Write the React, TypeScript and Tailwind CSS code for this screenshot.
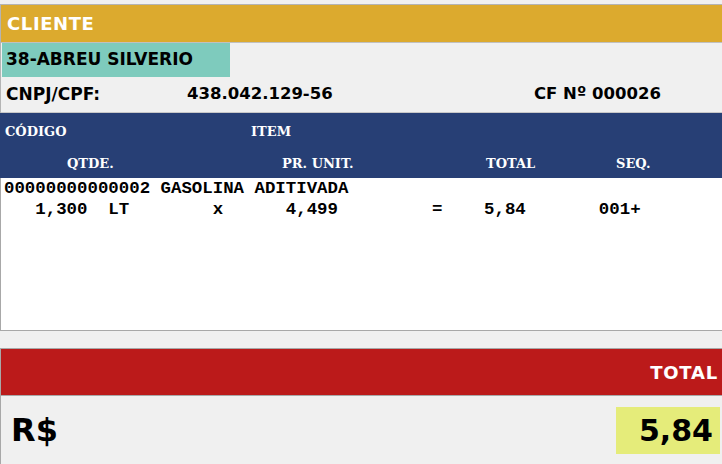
import React from 'react';

const sans = "font-['DejaVu_Sans',sans-serif] font-bold";
const head = "font-['DejaVu_Serif',serif] font-bold";
const mono = "font-['Liberation_Mono',monospace] font-bold";

const ITEM_LINE_1 = '00000000000002 GASOLINA ADITIVADA';
const ITEM_LINE_2 = '   1,300  LT        x      4,499         =    5,84       001+';

const App: React.FC = () => {
  return (
    <div className="w-[722px] h-[464px] bg-[#f0f0f0] flex flex-col overflow-hidden">
      {/* Cliente */}
      <div className="mt-[4px] border-t border-l border-[#b4b4b4] flex flex-col">
        <div className="h-[38px] bg-[#dcaa2e] border-b border-[#c0c0c0] flex items-center px-[6px]">
          <span className={`${sans} text-white text-[18px] tracking-[0.6px]`}>CLIENTE</span>
        </div>
        <div className="h-[34px] flex">
          <div className="w-[228px] ml-[1px] bg-[#7ecbbd] flex items-center px-[4px]">
            <span className={`${sans} text-black text-[17px]`}>38-ABREU SILVERIO</span>
          </div>
        </div>
        <div className="h-[36px] flex items-center border-b border-[#c8c8c8] text-black">
          <span className={`${sans} text-[17px] ml-[5px] w-[181px]`}>CNPJ/CPF:</span>
          <span className={`${sans} text-[16.5px] w-[347px]`}>438.042.129-56</span>
          <span className={`${sans} text-[16.5px]`}>CF Nº 000026</span>
        </div>
      </div>

      {/* Itens */}
      <div className="bg-[#273f75] h-[65px] flex flex-col text-white">
        <div className="h-[34px] pt-[3px] flex items-center">
          <span className={`${head} text-[13px] ml-[5px] w-[246px]`}>CÓDIGO</span>
          <span className={`${head} text-[13px]`}>ITEM</span>
        </div>
        <div className="h-[31px] pt-[2px] flex items-center">
          <span className={`${head} text-[13px] ml-[67px] w-[215px]`}>QTDE.</span>
          <span className={`${head} text-[13px] w-[204px]`}>PR. UNIT.</span>
          <span className={`${head} text-[13px] w-[130px]`}>TOTAL</span>
          <span className={`${head} text-[13px]`}>SEQ.</span>
        </div>
      </div>
      <div className="h-[153px] bg-white border-l border-b border-[#a8a8a8] pl-[3px]">
        <div className={`${mono} text-[17.4px] leading-[21px] text-black whitespace-pre`}>{ITEM_LINE_1}</div>
        <div className={`${mono} text-[17.4px] leading-[21px] text-black whitespace-pre`}>{ITEM_LINE_2}</div>
      </div>

      {/* Total */}
      <div className="mt-[17px] border-t border-l border-[#a8a8a8] flex flex-col flex-1">
        <div className="h-[47px] bg-[#bb1a1a] border-b border-[#a8a8a8] flex items-center justify-end pr-[4px]">
          <span className={`${sans} text-white text-[18px] tracking-[0.8px]`}>TOTAL</span>
        </div>
        <div className="flex-1 flex items-center justify-between pl-[10px] pr-[2px]">
          <span className={`${sans} text-black text-[32px]`}>R$</span>
          <div className="w-[104px] h-[47px] bg-[#e5ec7a] flex items-center justify-end pr-[7px]">
            <span className={`${sans} text-black text-[30px]`}>5,84</span>
          </div>
        </div>
      </div>
    </div>
  );
};

export default App;
